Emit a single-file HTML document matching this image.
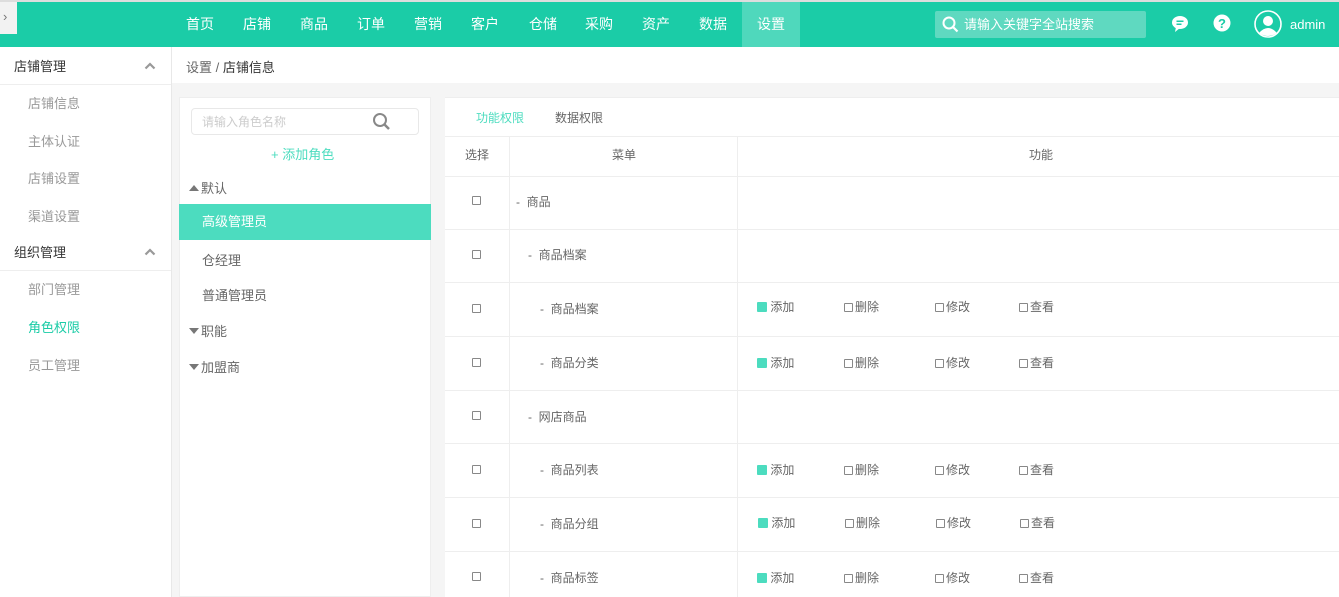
<!DOCTYPE html>
<html><head><meta charset="utf-8"><style>
*{margin:0;padding:0;box-sizing:border-box}
body{width:1339px;height:597px;overflow:hidden;background:#f5f5f5;font-family:"Liberation Sans","Noto Sans CJK SC",sans-serif;font-size:13px;color:#666;position:relative}
.a{position:absolute}
.top{left:0;top:0;width:1339px;height:47px;background:#1bcca7;border-top:2px solid #ddd}
.nav{top:2px;height:45px;line-height:45px;color:#fff;font-size:14px}
.side{left:0;top:47px;width:172px;height:550px;background:#fff;border-right:1px solid #e8e8e8}
.grp{left:0;width:171px;height:37px;line-height:37px;padding-left:14px;color:#333;font-size:13px;border-bottom:1px solid #eee}
.grp svg{position:absolute;right:15px;top:14px}
.it{left:28px;color:#999;font-size:13px}
.cb{display:inline-block;width:9px;height:9px;border:1px solid #888;border-radius:1px;vertical-align:-1px;margin-right:2px}
.ck{display:inline-block;width:10px;height:10px;background:#4cdcbf;border-radius:1px;vertical-align:-1px;position:relative}
.hl{left:509px;width:1px;background:#eee}
.row{left:445px;width:894px;height:1px;background:#eee}
.tri{display:inline-block;width:0;height:0;border-left:5px solid transparent;border-right:5px solid transparent;margin-right:2px;vertical-align:2px}
.up{border-bottom:6px solid #777}
.dn{border-top:6px solid #777}
</style></head><body>
<div class="a top"></div>
<div class="a" style="left:0;top:2px;width:17px;height:32px;background:#f2f2f2;color:#777;font-size:13px;line-height:30px;padding-left:3px">›</div>
<div class="a nav" style="left:186px">首页</div>
<div class="a nav" style="left:243px">店铺</div>
<div class="a nav" style="left:300px">商品</div>
<div class="a nav" style="left:357px">订单</div>
<div class="a nav" style="left:414px">营销</div>
<div class="a nav" style="left:471px">客户</div>
<div class="a nav" style="left:529px">仓储</div>
<div class="a nav" style="left:585px">采购</div>
<div class="a nav" style="left:642px">资产</div>
<div class="a nav" style="left:699px">数据</div>
<div class="a nav" style="left:742px;width:58px;background:#4fd8bc;text-align:center">设置</div>
<div class="a" style="left:935px;top:11px;width:211px;height:27px;background:#5fd9c0;border-radius:2px;color:#fff;font-size:13px;line-height:27px;padding-left:29px">请输入关键字全站搜索</div>
<svg class="a" style="left:942px;top:16px" width="17" height="17"><circle cx="7" cy="7" r="5.5" fill="none" stroke="#fff" stroke-width="2"/><line x1="11" y1="11" x2="15.5" y2="15.5" stroke="#fff" stroke-width="2.2"/></svg>
<svg class="a" style="left:1171px;top:15px" width="18" height="18"><ellipse cx="9" cy="7.5" rx="8" ry="6.5" fill="#fff"/><path d="M5 12 L4 17 L9 13Z" fill="#fff"/><rect x="5.5" y="5.5" width="7" height="1.5" fill="#1bcca7"/><rect x="5.5" y="8.5" width="5" height="1.5" fill="#1bcca7"/></svg>
<svg class="a" style="left:1213px;top:14px" width="18" height="18"><circle cx="9" cy="9" r="8.5" fill="#fff"/><text x="9" y="14" text-anchor="middle" font-size="13" font-weight="bold" fill="#1bcca7" font-family="Liberation Sans">?</text></svg>
<svg class="a" style="left:1254px;top:10px" width="28" height="28"><circle cx="14" cy="14" r="13" fill="none" stroke="#fff" stroke-width="1.6"/><circle cx="14" cy="11" r="5" fill="#fff"/><path d="M5 23 Q14 13 23 23 Q14 29 5 23Z" fill="#fff"/></svg>
<div class="a" style="left:1290px;top:17px;color:#fff;font-size:13px">admin</div>

<div class="a side"></div>
<div class="a grp" style="top:48px">店铺管理<svg width="12" height="8"><path d="M1.5 6.5 L6 2 L10.5 6.5" fill="none" stroke="#999" stroke-width="2.2"/></svg></div>
<div class="a it" style="top:93px">店铺信息</div>
<div class="a it" style="top:131px">主体认证</div>
<div class="a it" style="top:168px">店铺设置</div>
<div class="a it" style="top:206px">渠道设置</div>
<div class="a grp" style="top:234px">组织管理<svg width="12" height="8"><path d="M1.5 6.5 L6 2 L10.5 6.5" fill="none" stroke="#999" stroke-width="2.2"/></svg></div>
<div class="a it" style="top:279px">部门管理</div>
<div class="a it" style="top:317px;color:#1bcca7">角色权限</div>
<div class="a it" style="top:355px">员工管理</div>

<div class="a" style="left:172px;top:47px;width:1167px;height:36px;background:#fff"></div>
<div class="a" style="left:186px;top:57px;color:#666;font-size:13px">设置 / <span style="color:#333">店铺信息</span></div>

<div class="a" style="left:179px;top:97px;width:252px;height:500px;background:#fff;border:1px solid #eee"></div>
<div class="a" style="left:191px;top:108px;width:228px;height:27px;border:1px solid #e8e8e8;border-radius:4px;color:#ccc;font-size:12px;line-height:26px;padding-left:10px">请输入角色名称</div>
<svg class="a" style="left:372px;top:112px" width="20" height="20"><circle cx="8" cy="8" r="6" fill="none" stroke="#888" stroke-width="2"/><line x1="12.5" y1="12.5" x2="17" y2="17" stroke="#888" stroke-width="2.5"/></svg>
<div class="a" style="left:271px;top:144px;color:#4cdcbf;font-size:13px">+ 添加角色</div>
<div class="a" style="left:189px;top:178px;color:#666"><span class="tri up"></span>默认</div>
<div class="a" style="left:179px;top:204px;width:252px;height:36px;background:#4cdcbf;color:#fff;line-height:36px;padding-left:23px">高级管理员</div>
<div class="a" style="left:202px;top:250px">仓经理</div>
<div class="a" style="left:202px;top:285px">普通管理员</div>
<div class="a" style="left:189px;top:321px"><span class="tri dn"></span>职能</div>
<div class="a" style="left:189px;top:357px"><span class="tri dn"></span>加盟商</div>

<div class="a" style="left:445px;top:97px;width:894px;height:500px;background:#fff;border-top:1px solid #eee"></div>
<div class="a" style="left:476px;top:109px;color:#4cdcbf;font-size:12px">功能权限</div>
<div class="a" style="left:555px;top:109px;color:#666;font-size:12px">数据权限</div>
<div class="a row" style="top:136px"></div>
<div class="a hl" style="top:137px;height:460px"></div>
<div class="a hl" style="left:737px;top:137px;height:460px"></div>
<div class="a" style="left:465px;top:146px;font-size:12px">选择</div>
<div class="a" style="left:612px;top:146px;font-size:12px">菜单</div>
<div class="a" style="left:1029px;top:146px;font-size:12px">功能</div>

<div class="a row" style="top:176px"></div>
<div class="a row" style="top:229px"></div>
<div class="a row" style="top:282px"></div>
<div class="a row" style="top:336px"></div>
<div class="a row" style="top:390px"></div>
<div class="a row" style="top:443px"></div>
<div class="a row" style="top:497px"></div>
<div class="a row" style="top:551px"></div>

<div class="a" style="left:472px;top:192px"><span class="cb"></span></div>
<div class="a" style="left:516px;top:193px;font-size:12px">-&nbsp; 商品</div>
<div class="a" style="left:472px;top:246px"><span class="cb"></span></div>
<div class="a" style="left:528px;top:246px;font-size:12px">-&nbsp; 商品档案</div>
<div class="a" style="left:472px;top:300px"><span class="cb"></span></div>
<div class="a" style="left:540px;top:300px;font-size:12px">-&nbsp; 商品档案</div>
<div class="a" style="left:472px;top:354px"><span class="cb"></span></div>
<div class="a" style="left:540px;top:354px;font-size:12px">-&nbsp; 商品分类</div>
<div class="a" style="left:472px;top:407px"><span class="cb"></span></div>
<div class="a" style="left:528px;top:408px;font-size:12px">-&nbsp; 网店商品</div>
<div class="a" style="left:472px;top:461px"><span class="cb"></span></div>
<div class="a" style="left:540px;top:461px;font-size:12px">-&nbsp; 商品列表</div>
<div class="a" style="left:472px;top:515px"><span class="cb"></span></div>
<div class="a" style="left:540px;top:515px;font-size:12px">-&nbsp; 商品分组</div>
<div class="a" style="left:472px;top:568px"><span class="cb"></span></div>
<div class="a" style="left:540px;top:569px;font-size:12px">-&nbsp; 商品标签</div>

<div class="a" style="left:757px;top:298px;font-size:12px;width:320px"><span class="ck"></span> 添加<span style="position:absolute;left:87px"><span class="cb"></span>删除</span><span style="position:absolute;left:178px"><span class="cb"></span>修改</span><span style="position:absolute;left:262px"><span class="cb"></span>查看</span></div>
<div class="a" style="left:757px;top:354px;font-size:12px;width:320px"><span class="ck"></span> 添加<span style="position:absolute;left:87px"><span class="cb"></span>删除</span><span style="position:absolute;left:178px"><span class="cb"></span>修改</span><span style="position:absolute;left:262px"><span class="cb"></span>查看</span></div>
<div class="a" style="left:757px;top:461px;font-size:12px;width:320px"><span class="ck"></span> 添加<span style="position:absolute;left:87px"><span class="cb"></span>删除</span><span style="position:absolute;left:178px"><span class="cb"></span>修改</span><span style="position:absolute;left:262px"><span class="cb"></span>查看</span></div>
<div class="a" style="left:758px;top:514px;font-size:12px;width:320px"><span class="ck"></span> 添加<span style="position:absolute;left:87px"><span class="cb"></span>删除</span><span style="position:absolute;left:178px"><span class="cb"></span>修改</span><span style="position:absolute;left:262px"><span class="cb"></span>查看</span></div>
<div class="a" style="left:757px;top:569px;font-size:12px;width:320px"><span class="ck"></span> 添加<span style="position:absolute;left:87px"><span class="cb"></span>删除</span><span style="position:absolute;left:178px"><span class="cb"></span>修改</span><span style="position:absolute;left:262px"><span class="cb"></span>查看</span></div>
</body></html>
